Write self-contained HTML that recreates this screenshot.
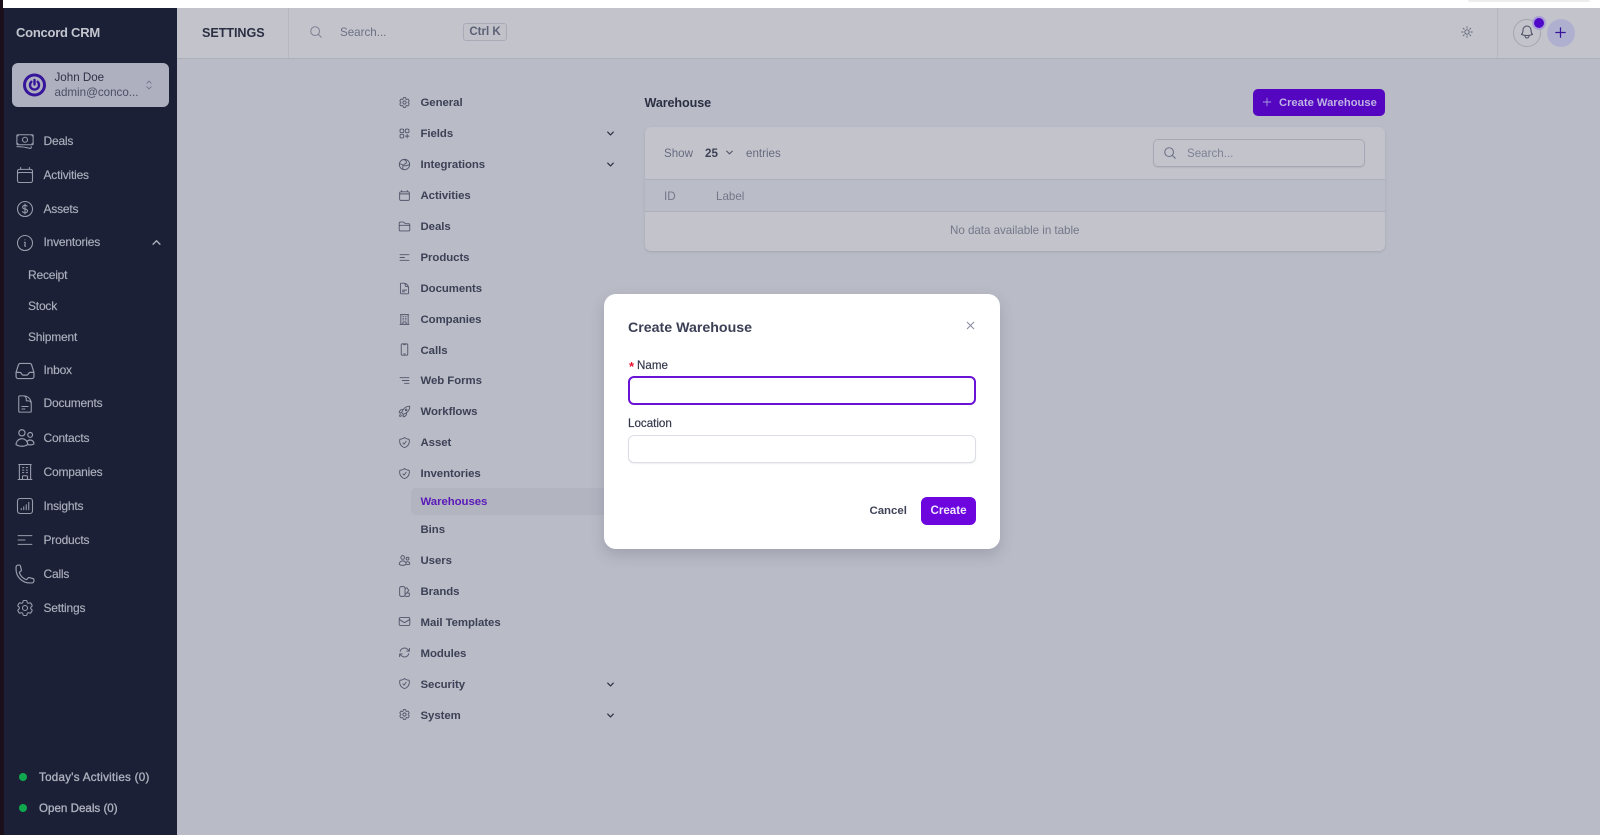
<!DOCTYPE html>
<html lang="en"><head><meta charset="utf-8"><title>Concord CRM</title>
<style>
*{box-sizing:border-box}
html,body{margin:0;padding:0}
body{width:1600px;height:835px;position:relative;overflow:hidden;background:#b9bbc6;font-family:"Liberation Sans",sans-serif}
.a{position:absolute}
.t{position:absolute;white-space:nowrap;line-height:16px;height:16px}
svg{position:absolute;fill:none;stroke-linecap:round;stroke-linejoin:round}
.s{font-size:12px;color:#aeb0bd;left:43.5px;letter-spacing:-.2px;-webkit-text-stroke:.15px #aeb0bd}
.ss{left:28px}
.n{font-size:11.4px;font-weight:bold;color:#3c4156;left:420.5px;letter-spacing:-.05px}
.si{stroke:#9a9cac;stroke-width:1.3;width:20px;height:20px;left:15px}
.ni{stroke:#51566a;stroke-width:1.7;width:13px;height:13px;left:398px}
.ch{stroke:#2c3044;stroke-width:3.2;width:9px;height:9px;left:606px}
</style></head><body>
<svg width="0" height="0" style="position:absolute"><defs>
<symbol id="bank" viewBox="0 0 24 24"><path d="M2.25 18.75a60.07 60.07 0 0 1 15.797 2.101c.727.198 1.453-.342 1.453-1.096V18.75M3.75 4.5v.75A.75.75 0 0 1 3 6h-.75m0 0v-.375c0-.621.504-1.125 1.125-1.125H20.25M2.25 6v9m18-10.5v.75c0 .414.336.75.75.75h.75m-1.5-1.5h.375c.621 0 1.125.504 1.125 1.125v9.75c0 .621-.504 1.125-1.125 1.125h-.375m1.5-1.5H21a.75.75 0 0 0-.75.75v.75m0 0H3.75m0 0h-.375a1.125 1.125 0 0 1-1.125-1.125V15m1.5 1.5v-.75A.75.75 0 0 0 3 15h-.75M15 10.5a3 3 0 1 1-6 0 3 3 0 0 1 6 0Z"/></symbol>
<symbol id="cal" viewBox="0 0 24 24"><path d="M6.75 3v2.25M17.25 3v2.25M3 18.75V7.5a2.25 2.25 0 0 1 2.25-2.25h13.5A2.25 2.25 0 0 1 21 7.5v11.25m-18 0A2.25 2.25 0 0 0 5.25 21h13.5A2.25 2.25 0 0 0 21 18.75m-18 0v-7.5A2.25 2.25 0 0 1 5.25 9h13.5A2.25 2.25 0 0 1 21 11.25v7.5"/></symbol>
<symbol id="usd" viewBox="0 0 24 24"><path d="M12 6v12m-3-2.818.879.659c1.171.879 3.07.879 4.242 0 1.172-.879 1.172-2.303 0-3.182C13.536 12.219 12.768 12 12 12c-.725 0-1.45-.22-2.003-.659-1.106-.879-1.106-2.303 0-3.182s2.9-.879 4.006 0l.415.33M21 12a9 9 0 1 1-18 0 9 9 0 0 1 18 0Z"/></symbol>
<symbol id="info" viewBox="0 0 24 24"><path d="m11.25 11.25.041-.02a.75.75 0 0 1 1.063.852l-.708 2.836a.75.75 0 0 0 1.063.853l.041-.021M21 12a9 9 0 1 1-18 0 9 9 0 0 1 18 0Zm-9-3.75h.008v.008H12V8.25Z"/></symbol>
<symbol id="inbox" viewBox="0 0 24 24"><path d="M2.25 13.5h3.86a2.25 2.25 0 0 1 2.012 1.244l.256.512a2.25 2.25 0 0 0 2.013 1.244h3.218a2.25 2.25 0 0 0 2.013-1.244l.256-.512a2.25 2.25 0 0 1 2.013-1.244h3.859m-19.5.338V18a2.25 2.25 0 0 0 2.25 2.25h15A2.25 2.25 0 0 0 21.75 18v-4.162c0-.224-.034-.447-.1-.661L19.24 5.338A2.25 2.25 0 0 0 17.088 3.75H6.912a2.25 2.25 0 0 0-2.15 1.588L2.35 13.177a2.25 2.25 0 0 0-.1.661Z"/></symbol>
<symbol id="doc" viewBox="0 0 24 24"><path d="M19.5 14.25v-2.625a3.375 3.375 0 0 0-3.375-3.375h-1.5A1.125 1.125 0 0 1 13.5 7.125v-1.5a3.375 3.375 0 0 0-3.375-3.375H8.25m0 12.75h7.5m-7.5 3H12M10.5 2.25H5.625c-.621 0-1.125.504-1.125 1.125v17.25c0 .621.504 1.125 1.125 1.125h12.75c.621 0 1.125-.504 1.125-1.125V11.25a9 9 0 0 0-9-9Z"/></symbol>
<symbol id="users" viewBox="0 0 24 24"><path d="M15 19.128a9.38 9.38 0 0 0 2.625.372 9.337 9.337 0 0 0 4.121-.952 4.125 4.125 0 0 0-7.533-2.493M15 19.128v-.003c0-1.113-.285-2.16-.786-3.07M15 19.128v.106A12.318 12.318 0 0 1 8.624 21c-2.331 0-4.512-.645-6.374-1.766l-.001-.109a6.375 6.375 0 0 1 11.964-3.07M12 6.375a3.375 3.375 0 1 1-6.75 0 3.375 3.375 0 0 1 6.75 0Zm8.25 2.25a2.625 2.625 0 1 1-5.25 0 2.625 2.625 0 0 1 5.25 0Z"/></symbol>
<symbol id="bld" viewBox="0 0 24 24"><path d="M3.75 21h16.5M4.5 3h15M5.25 3v18m13.5-18v18M9 6.75h1.5m-1.5 3h1.5m-1.5 3h1.5m3-6H15m-1.5 3H15m-1.5 3H15M9 21v-3.375c0-.621.504-1.125 1.125-1.125h3.75c.621 0 1.125.504 1.125 1.125V21"/></symbol>
<symbol id="chart" viewBox="0 0 24 24"><rect x="3" y="3" width="18" height="18" rx="3"/><path d="M7.5 16.5v-1.5M10.5 16.5v-3.5M13.5 16.5v-6M16.5 16.5v-9"/></symbol>
<symbol id="bars" viewBox="0 0 24 24"><path d="M3.75 6.75h16.5M3.75 12H12m-8.25 5.25h16.5"/></symbol>
<symbol id="barsr" viewBox="0 0 24 24"><path d="M3.75 6.75h16.5M8 12h12.25M12 17.25h8.25"/></symbol>
<symbol id="phone" viewBox="0 0 24 24"><path d="M2.25 6.75c0 8.284 6.716 15 15 15h2.25a2.25 2.25 0 0 0 2.25-2.25v-1.372c0-.516-.351-.966-.852-1.091l-4.423-1.106c-.44-.11-.902.055-1.173.417l-.97 1.293c-.282.376-.769.542-1.21.38a12.035 12.035 0 0 1-7.143-7.143c-.162-.441.004-.928.38-1.21l1.293-.97c.363-.271.527-.734.417-1.173L6.963 3.102a1.125 1.125 0 0 0-1.091-.852H4.5A2.25 2.25 0 0 0 2.25 4.5v2.25Z"/></symbol>
<symbol id="cog" viewBox="0 0 24 24"><path d="M9.594 3.94c.09-.542.56-.94 1.11-.94h2.593c.55 0 1.02.398 1.11.94l.213 1.281c.063.374.313.686.645.87.074.04.147.083.22.127.325.196.72.257 1.075.124l1.217-.456a1.125 1.125 0 0 1 1.37.49l1.296 2.247a1.125 1.125 0 0 1-.26 1.431l-1.003.827c-.293.241-.438.613-.43.992a7.723 7.723 0 0 1 0 .255c-.008.378.137.75.43.991l1.004.827c.424.35.534.955.26 1.43l-1.298 2.247a1.125 1.125 0 0 1-1.369.491l-1.217-.456c-.355-.133-.75-.072-1.076.124a6.47 6.47 0 0 1-.22.128c-.331.183-.581.495-.644.869l-.213 1.281c-.09.543-.56.94-1.11.94h-2.594c-.55 0-1.019-.398-1.11-.94l-.213-1.281c-.062-.374-.312-.686-.644-.87a6.52 6.52 0 0 1-.22-.127c-.325-.196-.72-.257-1.076-.124l-1.217.456a1.125 1.125 0 0 1-1.369-.49l-1.297-2.247a1.125 1.125 0 0 1 .26-1.431l1.004-.827c.292-.24.437-.613.43-.991a6.932 6.932 0 0 1 0-.255c.007-.38-.138-.751-.43-.992l-1.004-.827a1.125 1.125 0 0 1-.26-1.43l1.297-2.247a1.125 1.125 0 0 1 1.37-.491l1.216.456c.356.133.751.072 1.076-.124.072-.044.146-.086.22-.128.332-.183.582-.495.644-.869l.214-1.28Z"/><path d="M15 12a3 3 0 1 1-6 0 3 3 0 0 1 6 0Z"/></symbol>
<symbol id="shield" viewBox="0 0 24 24"><path d="M9 12.75 11.25 15 15 9.75m-3-7.036A11.959 11.959 0 0 1 3.598 6 11.99 11.99 0 0 0 3 9.749c0 5.592 3.824 10.29 9 11.623 5.176-1.332 9-6.03 9-11.622 0-1.31-.21-2.571-.598-3.751h-.152c-3.196 0-6.1-1.248-8.25-3.286Z"/></symbol>
<symbol id="folder" viewBox="0 0 24 24"><path d="M2.25 12.75V12A2.25 2.25 0 0 1 4.5 9.75h15A2.25 2.25 0 0 1 21.75 12v.75m-8.69-6.44-2.12-2.12a1.5 1.5 0 0 0-1.061-.44H4.5A2.25 2.25 0 0 0 2.25 6v12a2.25 2.25 0 0 0 2.25 2.25h15A2.25 2.25 0 0 0 21.75 18V9a2.25 2.25 0 0 0-2.25-2.25h-5.379a1.5 1.5 0 0 1-1.06-.44Z"/></symbol>
<symbol id="mobile" viewBox="0 0 24 24"><path d="M10.5 1.5H8.25A2.25 2.25 0 0 0 6 3.75v16.5a2.25 2.25 0 0 0 2.25 2.25h7.5A2.25 2.25 0 0 0 18 20.25V3.75a2.25 2.25 0 0 0-2.25-2.25H13.5m-3 0V3h3V1.5m-3 0h3m-3 18.75h3"/></symbol>
<symbol id="rocket" viewBox="0 0 24 24"><path d="M15.59 14.37a6 6 0 0 1-5.84 7.38v-4.8m5.84-2.58a14.98 14.98 0 0 0 6.16-12.12A14.98 14.98 0 0 0 9.631 8.41m5.96 5.96a14.926 14.926 0 0 1-5.841 2.58m-.119-8.54a6 6 0 0 0-7.381 5.84h4.8m2.581-5.84a14.927 14.927 0 0 0-2.58 5.84m2.699 2.7c-.103.021-.207.041-.311.06a15.09 15.09 0 0 1-2.448-2.448 14.9 14.9 0 0 1 .06-.312m-2.24 2.39a4.493 4.493 0 0 0-1.757 4.306 4.493 4.493 0 0 0 4.306-1.758M16.5 9a1.5 1.5 0 1 1-3 0 1.5 1.5 0 0 1 3 0Z"/></symbol>
<symbol id="mail" viewBox="0 0 24 24"><path d="M21.75 6.75v10.5a2.25 2.25 0 0 1-2.25 2.25h-15a2.25 2.25 0 0 1-2.25-2.25V6.75m19.5 0A2.25 2.25 0 0 0 19.5 4.5h-15a2.25 2.25 0 0 0-2.25 2.25m19.5 0v.243a2.25 2.25 0 0 1-1.07 1.916l-7.5 4.615a2.25 2.25 0 0 1-2.36 0L3.32 8.91a2.25 2.25 0 0 1-1.07-1.916V6.75"/></symbol>
<symbol id="sync" viewBox="0 0 24 24"><path d="M16.023 9.348h4.992v-.001M2.985 19.644v-4.992m0 0h4.992m-4.993 0 3.181 3.183a8.25 8.25 0 0 0 13.803-3.7M4.031 9.865a8.25 8.25 0 0 1 13.803-3.7l3.181 3.182m0-4.991v4.99"/></symbol>
<symbol id="bell" viewBox="0 0 24 24"><path d="M14.857 17.082a23.848 23.848 0 0 0 5.454-1.31A8.967 8.967 0 0 1 18 9.75V9A6 6 0 0 0 6 9v.75a8.967 8.967 0 0 1-2.312 6.022c1.733.64 3.56 1.085 5.455 1.31m5.714 0a24.255 24.255 0 0 1-5.714 0m5.714 0a3 3 0 1 1-5.714 0"/></symbol>
<symbol id="sun" viewBox="0 0 24 24"><path d="M12 3v2.25m6.364.386-1.591 1.591M21 12h-2.25m-.386 6.364-1.591-1.591M12 18.75V21m-4.773-4.227-1.591 1.591M5.25 12H3m4.227-4.773L5.636 5.636M15.75 12a3.75 3.75 0 1 1-7.5 0 3.75 3.75 0 0 1 7.5 0Z"/></symbol>
<symbol id="squares" viewBox="0 0 24 24"><path d="M13.5 16.875h3.375m0 0h3.375m-3.375 0V13.5m0 3.375v3.375M6 10.5h2.25a2.25 2.25 0 0 0 2.25-2.25V6a2.25 2.25 0 0 0-2.25-2.25H6A2.25 2.25 0 0 0 3.75 6v2.25A2.25 2.25 0 0 0 6 10.5Zm0 9.75h2.25A2.25 2.25 0 0 0 10.5 18v-2.25a2.25 2.25 0 0 0-2.25-2.25H6a2.25 2.25 0 0 0-2.25 2.25V18A2.25 2.25 0 0 0 6 20.25Zm9.75-9.75H18a2.25 2.25 0 0 0 2.25-2.25V6A2.25 2.25 0 0 0 18 3.75h-2.25A2.25 2.25 0 0 0 13.5 6v2.25a2.25 2.25 0 0 0 2.25 2.25Z"/></symbol>
<symbol id="globe" viewBox="0 0 24 24"><circle cx="12" cy="12" r="9.5"/><path d="M3 11c3 0 5 1 6 3s-1 3 0 6M12 3c1 2 4 3 4 5s-3 2-5 4 3 3 5 2 4-1 5-2"/></symbol>
<symbol id="brand" viewBox="0 0 24 24"><path d="M10 21H6a3 3 0 0 1-3-3V6a3 3 0 0 1 3-3h4a3 3 0 0 1 3 3v12a3 3 0 0 1-3 3Z"/><path d="M13 7l3-2 4 5-7 8M14 21h5a2 2 0 0 0 2-2v-4h-3"/></symbol>
<symbol id="chd" viewBox="0 0 24 24"><path d="m19.5 8.25-7.5 7.5-7.5-7.5"/></symbol>
<symbol id="chu" viewBox="0 0 24 24"><path d="m4.5 15.75 7.5-7.5 7.5 7.5"/></symbol>
<symbol id="ud" viewBox="0 0 24 24"><path d="m8.25 9 3.75-3.75L15.75 9M8.25 15l3.75 3.75L15.75 15"/></symbol>
<symbol id="mag" viewBox="0 0 24 24"><path d="m21 21-5.197-5.197m0 0A7.5 7.5 0 1 0 5.196 5.196a7.5 7.5 0 0 0 10.607 10.607Z"/></symbol>
<symbol id="plus" viewBox="0 0 24 24"><path d="M12 4.5v15m7.5-7.5h-15"/></symbol>
<symbol id="x" viewBox="0 0 24 24"><path d="M6 18 18 6M6 6l12 12"/></symbol>
</defs></svg>

<!-- chrome -->
<div class="a" style="left:0;top:0;width:4px;height:835px;background:#1a0f1b"></div>
<div class="a" style="left:3px;top:0;width:1597px;height:8px;background:#fff"></div>
<div class="a" style="left:1468px;top:0;width:122px;height:2px;background:#eceded;border-radius:0 0 4px 4px"></div>

<!-- sidebar -->
<div class="a" style="left:4px;top:8px;width:173px;height:827px;background:#1b2036"></div>
<div class="t" style="left:16px;top:25px;font-size:13px;font-weight:bold;color:#c3c5cf;letter-spacing:-.25px">Concord CRM</div>
<div class="a" style="left:12px;top:63px;width:157px;height:44px;background:#aeb0bf;border-radius:6px"></div>
<svg style="left:23px;top:73px" width="24" height="24" viewBox="0 0 24 24"><circle cx="11.5" cy="12" r="10" stroke="#37159b" stroke-width="3"/><path d="M8.4 8.8a4.5 4.5 0 1 0 6.2 0" stroke="#37159b" stroke-width="2.4"/><path d="M11.5 7v4.5" stroke="#37159b" stroke-width="2.4"/></svg>
<div class="t" style="left:54.5px;top:70px;font-size:11.6px;color:#2e3247">John Doe</div>
<div class="t" style="left:54.5px;top:85px;font-size:11.6px;color:#4a4f66">admin@conco...</div>
<svg style="left:142px;top:77px;stroke:#6f7388;stroke-width:1.5" width="14" height="16"><use href="#ud"/></svg>

<svg class="si" style="top:131px"><use href="#bank"/></svg><div class="t s" style="top:133px">Deals</div>
<svg class="si" style="top:165px"><use href="#cal"/></svg><div class="t s" style="top:166.5px">Activities</div>
<svg class="si" style="top:199px"><use href="#usd"/></svg><div class="t s" style="top:200.5px">Assets</div>
<svg class="si" style="top:233px"><use href="#info"/></svg><div class="t s" style="top:234px">Inventories</div>
<svg style="left:151px;top:237px;stroke:#aeb0bd;stroke-width:3" width="11" height="11"><use href="#chu"/></svg>
<div class="t s ss" style="top:267px">Receipt</div>
<div class="t s ss" style="top:298px">Stock</div>
<div class="t s ss" style="top:329px">Shipment</div>
<svg class="si" style="top:360px;left:14px;width:22px;height:22px"><use href="#inbox"/></svg><div class="t s" style="top:362px">Inbox</div>
<svg class="si" style="top:394px;width:20px;height:20px"><use href="#doc"/></svg><div class="t s" style="top:395px">Documents</div>
<svg class="si" style="top:427px;left:14px;width:22px;height:22px"><use href="#users"/></svg><div class="t s" style="top:430px">Contacts</div>
<svg class="si" style="top:462px"><use href="#bld"/></svg><div class="t s" style="top:464px">Companies</div>
<svg class="si" style="top:496px"><use href="#chart"/></svg><div class="t s" style="top:498px">Insights</div>
<svg class="si" style="top:530px"><use href="#bars"/></svg><div class="t s" style="top:532px">Products</div>
<svg class="si" style="top:563px;left:14px;width:22px;height:22px"><use href="#phone"/></svg><div class="t s" style="top:566px">Calls</div>
<svg class="si" style="top:598px"><use href="#cog"/></svg><div class="t s" style="top:600px">Settings</div>
<div class="a" style="left:19px;top:773px;width:8px;height:8px;border-radius:50%;background:#10a84f"></div>
<div class="t" style="left:39px;top:770px;font-size:11.6px;color:#aeb0bd;letter-spacing:.27px;-webkit-text-stroke:.35px #aeb0bd">Today's Activities (0)</div>
<div class="a" style="left:19px;top:804px;width:8px;height:8px;border-radius:50%;background:#10a84f"></div>
<div class="t" style="left:39px;top:801px;font-size:11.6px;color:#aeb0bd;-webkit-text-stroke:.35px #aeb0bd">Open Deals (0)</div>

<!-- header -->
<div class="a" style="left:177px;top:8px;width:1423px;height:51px;background:#c3c4cb;border-bottom:1px solid #adafbb"></div>
<div class="a" style="left:288px;top:8px;width:1px;height:50px;background:#b6b8c1"></div>
<div class="a" style="left:1497px;top:8px;width:1px;height:50px;background:#b6b8c1"></div>
<div class="t" style="left:202px;top:24.5px;font-size:12.6px;font-weight:bold;color:#2b2f43;letter-spacing:-.05px">SETTINGS</div>
<svg style="left:309px;top:25px;stroke:#7b7f92;stroke-width:1.7" width="14" height="14"><use href="#mag"/></svg>
<div class="t" style="left:340px;top:25px;font-size:11.6px;color:#6c7085">Search...</div>
<div class="a" style="left:463px;top:23px;width:44px;height:18px;border:1px solid #a9abb8;border-radius:3px;background:#c0c1c9;text-align:center;font-size:11.5px;font-weight:bold;line-height:16px;color:#5d6176">Ctrl K</div>
<svg style="left:1460px;top:25px;stroke:#5f6377;stroke-width:1.6" width="14" height="14"><use href="#sun"/></svg>
<div class="a" style="left:1513px;top:19px;width:28px;height:28px;border:1px solid #a3a5b1;border-radius:50%"></div>
<svg style="left:1519px;top:24px;stroke:#4b4f62;stroke-width:1.5" width="16" height="16"><use href="#bell"/></svg>
<div class="a" style="left:1532px;top:16px;width:14px;height:14px;border-radius:50%;background:#a99fd6"></div>
<div class="a" style="left:1534px;top:18px;width:10px;height:10px;border-radius:50%;background:#4f08c9"></div>
<div class="a" style="left:1547px;top:19px;width:28px;height:28px;border-radius:50%;background:#afafd0"></div>
<svg style="left:1553px;top:25px;stroke:#37159b;stroke-width:2" width="15" height="15"><use href="#plus"/></svg>

<!-- settings nav -->
<svg class="ni" style="top:96px"><use href="#cog"/></svg><div class="t n" style="top:95px">General</div>
<svg class="ni" style="top:127px"><use href="#squares"/></svg><div class="t n" style="top:126px">Fields</div><svg class="ch" style="top:129px"><use href="#chd"/></svg>
<svg class="ni" style="top:158px"><use href="#globe"/></svg><div class="t n" style="top:157px">Integrations</div><svg class="ch" style="top:160px"><use href="#chd"/></svg>
<svg class="ni" style="top:189px"><use href="#cal"/></svg><div class="t n" style="top:188px">Activities</div>
<svg class="ni" style="top:220px"><use href="#folder"/></svg><div class="t n" style="top:219px">Deals</div>
<svg class="ni" style="top:251px"><use href="#bars"/></svg><div class="t n" style="top:250px">Products</div>
<svg class="ni" style="top:282px"><use href="#doc"/></svg><div class="t n" style="top:281px">Documents</div>
<svg class="ni" style="top:313px"><use href="#bld"/></svg><div class="t n" style="top:312px">Companies</div>
<svg class="ni" style="top:343px"><use href="#mobile"/></svg><div class="t n" style="top:343px">Calls</div>
<svg class="ni" style="top:374px"><use href="#barsr"/></svg><div class="t n" style="top:373px">Web Forms</div>
<svg class="ni" style="top:405px"><use href="#rocket"/></svg><div class="t n" style="top:404px">Workflows</div>
<svg class="ni" style="top:436px"><use href="#shield"/></svg><div class="t n" style="top:435px">Asset</div>
<svg class="ni" style="top:467px"><use href="#shield"/></svg><div class="t n" style="top:466px">Inventories</div>
<div class="a" style="left:411px;top:488px;width:200px;height:27px;background:#b2b4c0;border-radius:5px"></div>
<div class="t n" style="top:494px;color:#5a19b8">Warehouses</div>
<div class="t n" style="top:522px">Bins</div>
<svg class="ni" style="top:554px"><use href="#users"/></svg><div class="t n" style="top:553px">Users</div>
<svg class="ni" style="top:585px"><use href="#brand"/></svg><div class="t n" style="top:584px">Brands</div>
<svg class="ni" style="top:615px"><use href="#mail"/></svg><div class="t n" style="top:615px">Mail Templates</div>
<svg class="ni" style="top:646px"><use href="#sync"/></svg><div class="t n" style="top:646px">Modules</div>
<svg class="ni" style="top:677px"><use href="#shield"/></svg><div class="t n" style="top:677px">Security</div><svg class="ch" style="top:680px"><use href="#chd"/></svg>
<svg class="ni" style="top:708px"><use href="#cog"/></svg><div class="t n" style="top:708px">System</div><svg class="ch" style="top:711px"><use href="#chd"/></svg>

<!-- main -->
<div class="t" style="left:644.5px;top:95px;font-size:12.6px;font-weight:bold;color:#2b2f43;letter-spacing:-.1px">Warehouse</div>
<div class="a" style="left:1253px;top:89px;width:132px;height:27px;background:#5406c1;border-radius:5px"></div>
<svg style="left:1261px;top:96px;stroke:#a99bdd;stroke-width:1.8" width="12" height="12"><use href="#plus"/></svg>
<div class="t" style="left:1279px;top:95px;font-size:11.2px;font-weight:bold;color:#bdb3e2">Create Warehouse</div>
<div class="a" style="left:645px;top:127px;width:740px;height:124px;background:#c3c4cb;border-radius:6px;box-shadow:0 1px 2px rgba(100,100,120,.25)"></div>
<div class="a" style="left:645px;top:179px;width:740px;height:33px;background:#babcc7;border-top:1px solid #adafbd;border-bottom:1px solid #adafbd"></div>
<div class="t" style="left:664px;top:146px;font-size:11.6px;color:#666a7f">Show</div>
<div class="t" style="left:705px;top:146px;font-size:11.6px;font-weight:bold;color:#3c4156">25</div>
<svg style="left:725px;top:148px;stroke:#4d5166;stroke-width:2.8" width="9" height="9"><use href="#chd"/></svg>
<div class="t" style="left:746px;top:146px;font-size:11.6px;color:#666a7f">entries</div>
<div class="a" style="left:1153px;top:139px;width:212px;height:28px;border:1px solid #a6a8b6;border-radius:5px;box-shadow:0 1px 1px rgba(100,100,120,.15)"></div>
<svg style="left:1163px;top:146px;stroke:#6d7186;stroke-width:1.9" width="14" height="14"><use href="#mag"/></svg>
<div class="t" style="left:1187px;top:146px;font-size:11.6px;color:#7d8195">Search...</div>
<div class="t" style="left:664px;top:189px;font-size:11.6px;color:#737789">ID</div>
<div class="t" style="left:716px;top:189px;font-size:11.6px;color:#737789">Label</div>
<div class="t" style="left:950px;top:223px;font-size:11.6px;letter-spacing:-.03px;color:#737789">No data available in table</div>

<!-- modal -->
<div class="a" style="left:604px;top:294px;width:396px;height:255px;background:#fff;border-radius:12px;box-shadow:0 6px 14px rgba(70,74,95,.22)"></div>
<div class="t" style="left:628px;top:319.5px;font-size:14.2px;font-weight:bold;color:#3b4056">Create Warehouse</div>
<svg style="left:964px;top:319px;stroke:#8b8fa2;stroke-width:2" width="13" height="13"><use href="#x"/></svg>
<div class="t" style="left:629px;top:359px;font-size:13px;font-weight:bold;color:#e5132f">*</div>
<div class="t" style="left:637px;top:358px;font-size:11.6px;color:#35394d;-webkit-text-stroke:.2px #35394d">Name</div>
<div class="a" style="left:628px;top:376px;width:348px;height:29px;border:2px solid #6a13d4;border-radius:6px;background:#fff"></div>
<div class="t" style="left:628px;top:416px;font-size:11.6px;color:#35394d;-webkit-text-stroke:.2px #35394d">Location</div>
<div class="a" style="left:628px;top:435px;width:348px;height:28px;border:1px solid #dcdee5;border-radius:6px;background:#fff;box-shadow:0 1px 1px rgba(120,120,140,.12)"></div>
<div class="t" style="left:869.5px;top:503px;font-size:11.4px;font-weight:bold;color:#3f4357">Cancel</div>
<div class="a" style="left:921px;top:497px;width:55px;height:28px;background:#6d05de;border-radius:6px;text-align:center;font-size:11.6px;font-weight:bold;line-height:27px;color:#f0e7fc">Create</div>
</body></html>
